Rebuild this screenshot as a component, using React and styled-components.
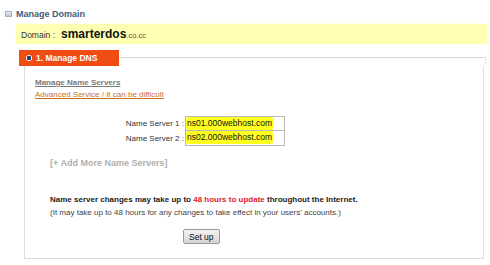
import React from "react";
import styled, { createGlobalStyle } from "styled-components";

const GlobalStyle = createGlobalStyle`
  body {
    margin: 0;
    background: #ffffff;
    font-family: "Liberation Sans", Arial, sans-serif;
  }
`;

const Page = styled.div`
  width: 490px;
  height: 265px;
  padding: 9px 3px 0 5px;
  box-sizing: border-box;
  overflow: hidden;
`;

const Heading = styled.div`
  display: flex;
  align-items: center;
  gap: 4px;
  height: 10px;
  font-size: 9px;
  font-weight: bold;
  color: #3f5d7c;
`;

const HeadIcon = styled.span`
  width: 7px;
  height: 6px;
  border: 1px solid #9fb1c4;
  background: linear-gradient(#e8eef5, #b9c7d6);
  box-sizing: border-box;
`;

const DomainBar = styled.div`
  display: flex;
  align-items: baseline;
  margin: 5px 0 0 11px;
  height: 20px;
  padding: 0 5px;
  background: #ffffb4;
  box-shadow: 0 0 2px #ffffc8;
  font-size: 8.5px;
  color: #333;
  line-height: 20px;
`;

const DomainName = styled.b`
  margin-left: 6px;
  font-size: 12px;
  color: #111;
`;

const Tld = styled.span`
  font-size: 7.5px;
  color: #555;
`;

const TabRow = styled.div`
  display: flex;
  align-items: center;
  margin: 6px 0 0 14px;
`;

const Tab = styled.div`
  display: flex;
  align-items: center;
  gap: 4px;
  width: 100px;
  height: 16px;
  padding-left: 7px;
  box-sizing: border-box;
  background: #f04c14;
  color: #fff;
  font-size: 8.5px;
  font-weight: bold;
`;

const Bullet = styled.span`
  width: 6px;
  height: 6px;
  border-radius: 50%;
  background: radial-gradient(circle at 50% 50%, #1f3f6e 0 2px, #fff 2.5px);
`;

const TabLine = styled.div`
  flex: 1;
  height: 1px;
  background: #d6d6d6;
  align-self: center;
  margin-top: -1px;
  margin-right: 1px;
  position: relative;
  &::after {
    content: "";
    position: absolute;
    right: 0;
    top: 0;
    width: 1px;
    height: 8px;
    background: #e4e4e4;
  }
`;

const Panel = styled.div`
  margin: 0 3px 0 19px;
  height: 193px;
  border-left: 1px solid #dcdcdc;
  border-right: 1px solid #e4e4e4;
  border-bottom: 1px solid #dcdcdc;
  padding: 12px 0 0 10px;
  box-sizing: border-box;
`;

const SubTitle = styled.div`
  font-size: 8px;
  font-weight: bold;
  color: #7a7a7a;
  text-decoration: underline;
`;

const WarnLink = styled.a`
  display: block;
  margin-top: 3px;
  font-size: 8px;
  color: #c9701f;
  text-decoration: underline;
`;

const ServerGrid = styled.div`
  display: grid;
  grid-template-columns: 150px 100px;
  margin-top: 17px;
`;

const ServerLabel = styled.div`
  text-align: right;
  font-size: 8px;
  color: #333;
  line-height: 15px;
  padding-right: 1px;
`;

const Field = styled.div`
  height: 15px;
  border: 1px solid #b8b8b8;
  border-top: ${({ $first }) => ($first ? "1px solid #b8b8b8" : "none")};
  box-sizing: border-box;
  font-size: 8.5px;
  line-height: 13px;
  color: #111;
  background: #fff;
`;

const Marker = styled.span`
  display: inline-block;
  padding: 0 1px;
  background: #ffff20;
  border-radius: 2px;
`;

const AddMore = styled.div`
  margin: 12px 0 0 15px;
  font-size: 9px;
  font-weight: bold;
  color: #b0b0b0;
`;

const Notice = styled.div`
  margin: 27px 0 0 15px;
  font-size: 8px;
  font-weight: bold;
  color: #222;
`;

const Red = styled.span`
  color: #e0202c;
`;

const Note = styled.div`
  margin: 4px 0 0 15px;
  font-size: 8px;
  color: #444;
`;

const Actions = styled.div`
  display: flex;
  margin: 12px 0 0 148px;
`;

const Button = styled.button`
  height: 15px;
  padding: 0 5px;
  font-family: "Liberation Sans", Arial, sans-serif;
  font-size: 8.5px;
  color: #111;
  border: 1px solid #9a9a9a;
  border-radius: 2px;
  background: linear-gradient(#f4f4f4, #d4d4d4);
`;

const servers = ["ns01.000webhost.com", "ns02.000webhost.com"];

export default function App() {
  return (
    <Page>
      <GlobalStyle />
      <Heading>
        <HeadIcon />
        Manage Domain
      </Heading>
      <DomainBar>
        Domain :<DomainName>smarterdos</DomainName>
        <Tld>.co.cc</Tld>
      </DomainBar>
      <TabRow>
        <Tab>
          <Bullet />
          1. Manage DNS
        </Tab>
        <TabLine />
      </TabRow>
      <Panel>
        <SubTitle>Manage Name Servers</SubTitle>
        <WarnLink>Advanced Service / It can be difficult</WarnLink>
        <ServerGrid>
          {servers.map((s, i) => (
            <React.Fragment key={s}>
              <ServerLabel>Name Server {i + 1} :</ServerLabel>
              <Field $first={i === 0}>
                <Marker>{s}</Marker>
              </Field>
            </React.Fragment>
          ))}
        </ServerGrid>
        <AddMore>[+ Add More Name Servers]</AddMore>
        <Notice>
          Name server changes may take up to <Red>48 hours to update</Red>{" "}
          throughout the Internet.
        </Notice>
        <Note>
          (It may take up to 48 hours for any changes to take effect in your
          users' accounts.)
        </Note>
        <Actions>
          <Button>Set up</Button>
        </Actions>
      </Panel>
    </Page>
  );
}
